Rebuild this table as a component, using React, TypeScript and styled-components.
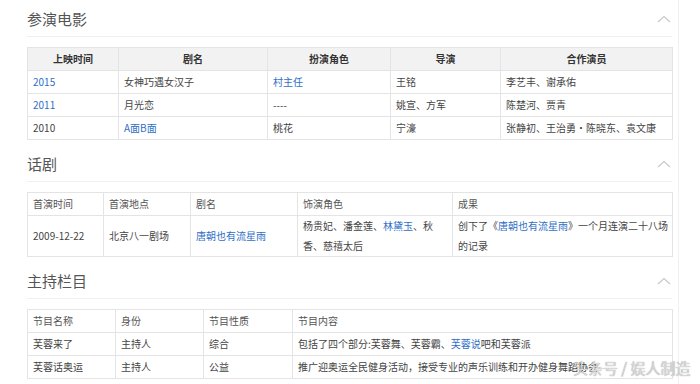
import React from 'react';
import styled, { createGlobalStyle } from 'styled-components';

const GlobalStyle = createGlobalStyle`
  html, body {
    margin: 0;
    padding: 0;
    background: #fff;
  }
  body {
    font-family: 'Noto Sans CJK SC', 'Liberation Sans', sans-serif;
    color: #444;
  }
`;

const Screen = styled.div`
  position: relative;
  width: 700px;
  height: 384px;
  overflow: hidden;
`;

const Page = styled.div`
  width: 679px;
  height: 384px;
  border-right: 1px solid #f1f1f1;
  padding-left: 27px;
  box-sizing: border-box;
`;

const Section = styled.section<{ first?: boolean }>`
  width: 645px;
  margin-top: ${({ first }) => (first ? '0' : '5px')};
`;

const SectionHead = styled.div`
  display: flex;
  align-items: center;
  justify-content: space-between;
  padding: 9px 0 7px;
  border-bottom: 1px solid #f0f0f0;
`;

const Title = styled.h2`
  margin: 0;
  font-size: 15px;
  font-weight: 400;
  line-height: 20px;
  color: #555;
`;

const Chevron = styled.svg`
  width: 14px;
  height: 8px;
  margin-right: 1px;
`;

const Table = styled.table`
  width: 645px;
  margin-top: 10px;
  border-collapse: collapse;
  table-layout: fixed;
  font-size: 10px;
  color: #444;
`;

const Col = styled.col<{ w: number }>`
  width: ${({ w }) => w}px;
`;

const Th = styled.th<{ strong?: boolean }>`
  border: 1px solid #e4e4e4;
  background: ${({ strong }) => (strong ? '#f2f2f2' : '#fff')};
  font-weight: ${({ strong }) => (strong ? 700 : 400)};
  text-align: ${({ strong }) => (strong ? 'center' : 'left')};
  color: ${({ strong }) => (strong ? '#333' : '#555')};
  height: 22px;
  padding: 0 5px;
  line-height: 22px;
`;

const Td = styled.td<{ tall?: boolean }>`
  border: 1px solid #e4e4e4;
  height: ${({ tall }) => (tall ? '40px' : '22px')};
  padding: 0 4px 0 5px;
  line-height: ${({ tall }) => (tall ? '20px' : '22px')};
  vertical-align: middle;
  word-break: break-all;
`;

const Link = styled.span`
  color: #2f6fc6;
`;

const Watermark = styled.div`
  position: absolute;
  left: 573px;
  top: 358px;
  font-size: 15px;
  line-height: 20px;
  color: #d9d9d9;
  text-shadow: 0 0 1px rgba(0, 0, 0, 0.45);
  white-space: nowrap;
`;

type Cell = React.ReactNode;

interface SectionData {
  title: string;
  cols: number[];
  strongHead?: boolean;
  head: string[];
  rows: Cell[][];
  tall?: boolean;
}

const sections: SectionData[] = [
  {
    title: '参演电影',
    cols: [91, 149, 123, 110, 172],
    strongHead: true,
    head: ['上映时间', '剧名', '扮演角色', '导演', '合作演员'],
    rows: [
      [<Link>2015</Link>, '女神巧遇女汉子', <Link>村主任</Link>, '王铭', '李艺丰、谢承佑'],
      [<Link>2011</Link>, '月光恋', '----', '姚宣、方军', '陈楚河、贾青'],
      ['2010', <Link>A面B面</Link>, '桃花', '宁濠', '张静初、王治勇・陈晓东、袁文康'],
    ],
  },
  {
    title: '话剧',
    cols: [76, 87, 107, 155, 220],
    head: ['首演时间', '首演地点', '剧名', '饰演角色', '成果'],
    tall: true,
    rows: [
      [
        '2009-12-22',
        '北京八一剧场',
        <Link>唐朝也有流星雨</Link>,
        <>
          杨贵妃、潘金莲、<Link>林黛玉</Link>、秋香、慈禧太后
        </>,
        <>
          创下了《<Link>唐朝也有流星雨</Link>》一个月连演二十八场的记录
        </>,
      ],
    ],
  },
  {
    title: '主持栏目',
    cols: [88, 88, 89, 380],
    head: ['节目名称', '身份', '节目性质', '节目内容'],
    rows: [
      [
        '芙蓉来了',
        '主持人',
        '综合',
        <>
          包括了四个部分:芙蓉舞、芙蓉霸、<Link>芙蓉说</Link>吧和芙蓉派
        </>,
      ],
      ['芙蓉话奥运', '主持人', '公益', '推广迎奥运全民健身活动，接受专业的声乐训练和开办健身舞蹈协会'],
    ],
  },
];

const App = () => {
  return (
    <Screen>
      <GlobalStyle />
      <Page>
        {sections.map((s, i) => (
          <Section key={s.title} first={i === 0}>
            <SectionHead>
              <Title>{s.title}</Title>
              <Chevron viewBox="0 0 14 8">
                <polyline points="1,7 7,1.5 13,7" fill="none" stroke="#c9c9c9" strokeWidth="1.2" />
              </Chevron>
            </SectionHead>
            <Table>
              <colgroup>
                {s.cols.map((w, j) => (
                  <Col key={j} w={w} />
                ))}
              </colgroup>
              <thead>
                <tr>
                  {s.head.map((h) => (
                    <Th key={h} strong={s.strongHead}>
                      {h}
                    </Th>
                  ))}
                </tr>
              </thead>
              <tbody>
                {s.rows.map((r, k) => (
                  <tr key={k}>
                    {r.map((c, j) => (
                      <Td key={j} tall={s.tall}>
                        {c}
                      </Td>
                    ))}
                  </tr>
                ))}
              </tbody>
            </Table>
          </Section>
        ))}
      </Page>
      <Watermark>头条号 / 娱人制造</Watermark>
    </Screen>
  );
};

export default App;
